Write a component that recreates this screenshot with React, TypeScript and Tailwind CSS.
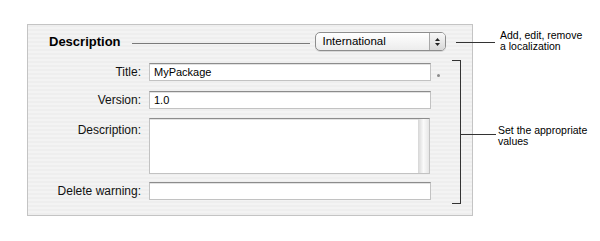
import { ReactNode } from "react";

const field =
  "bg-white border border-[#c2c2c2] border-t-[#8c8c8c] shadow-[inset_0_1px_0_#e2e2e2]";

function Row({ label, children, className = "", top = false }: { label: string; children: ReactNode; className?: string; top?: boolean }) {
  return (
    <div className={`flex ${top ? "items-start" : "items-center"} ${className}`}>
      <div className={`w-[113px] text-right text-[12px] text-[#111] ${top ? "pt-[3px]" : ""}`}>{label}</div>
      <div className="ml-[8px] flex items-center">{children}</div>
    </div>
  );
}

export default function App() {
  return (
    <div className="w-[600px] h-[241px] bg-white relative font-['Liberation_Sans',Arial,sans-serif] text-black">
      <div className="flex pt-[24px] pl-[27px]">
        {/* panel */}
        <div className="w-[446px] h-[192px] border border-[#c4c4c4] bg-[repeating-linear-gradient(180deg,#eeeeee_0px,#eeeeee_2px,#f3f3f3_2px,#f3f3f3_4px)]">
          <div className="flex items-center mt-[7px] h-[19px]">
            <span className="ml-[21px] text-[13px] font-bold">Description</span>
            <div className="ml-[11px] w-[178px] h-px bg-[#7a7a7a] mt-[4px]" />
            <div className="ml-[5px] w-[131px] h-[19px] rounded-[5px] border border-[#8d8d8d] bg-gradient-to-b from-white to-[#ececec] flex items-stretch overflow-hidden shadow-[0_1px_0_#d8d8d8]">
              <span className="flex-1 pl-[7px] text-[11.5px] leading-[17px]">International</span>
              <div className="w-[16px] border-l border-[#a8a8a8] bg-gradient-to-b from-[#f8f8f8] to-[#d8d8d8] flex flex-col items-center justify-center gap-[2px]">
                <svg width="5" height="3" viewBox="0 0 5 3"><path d="M0 3 L2.5 0 L5 3 Z" fill="#222" /></svg>
                <svg width="5" height="3" viewBox="0 0 5 3"><path d="M0 0 L2.5 3 L5 0 Z" fill="#222" /></svg>
              </div>
            </div>
          </div>

          <Row label="Title:" className="mt-[12px]">
            <div className={`${field} w-[282px] h-[18px] pl-[4px] text-[11px] leading-[16px]`}>MyPackage</div>
            <div className="ml-[6px] mt-[7px] w-[3px] h-[3px] rounded-full bg-[#8a8a8a]" />
          </Row>
          <Row label="Version:" className="mt-[10px]">
            <div className={`${field} w-[282px] h-[18px] pl-[4px] text-[11px] leading-[16px]`}>1.0</div>
          </Row>
          <Row label="Description:" className="mt-[9px]" top>
            <div className={`${field} w-[281px] h-[56px] flex justify-end`}>
              <div className="w-[11px] h-full bg-gradient-to-r from-[#d6d6d6] via-[#fafafa] to-[#e6e6e6]" />
            </div>
          </Row>
          <Row label="Delete warning:" className="mt-[8px]">
            <div className={`${field} w-[282px] h-[18px]`} />
          </Row>
        </div>

        {/* callouts */}
        <div className="relative flex-1 text-[10.5px] leading-[11px] text-black">
          <div className="absolute left-[-17px] top-[18px] w-[39px] h-px bg-[#333]" />
          <div className="absolute left-[27px] top-[6px]">
            <div>Add, edit, remove</div>
            <div>a localization</div>
          </div>

          <div className="absolute left-[-21px] top-[36px] w-[9px] h-[144px] border-t border-r border-b border-[#333]" />
          <div className="absolute left-[-12px] top-[110px] w-[35px] h-px bg-[#333]" />
          <div className="absolute left-[25px] top-[101px]">
            <div>Set the appropriate</div>
            <div>values</div>
          </div>
        </div>
      </div>
    </div>
  );
}
